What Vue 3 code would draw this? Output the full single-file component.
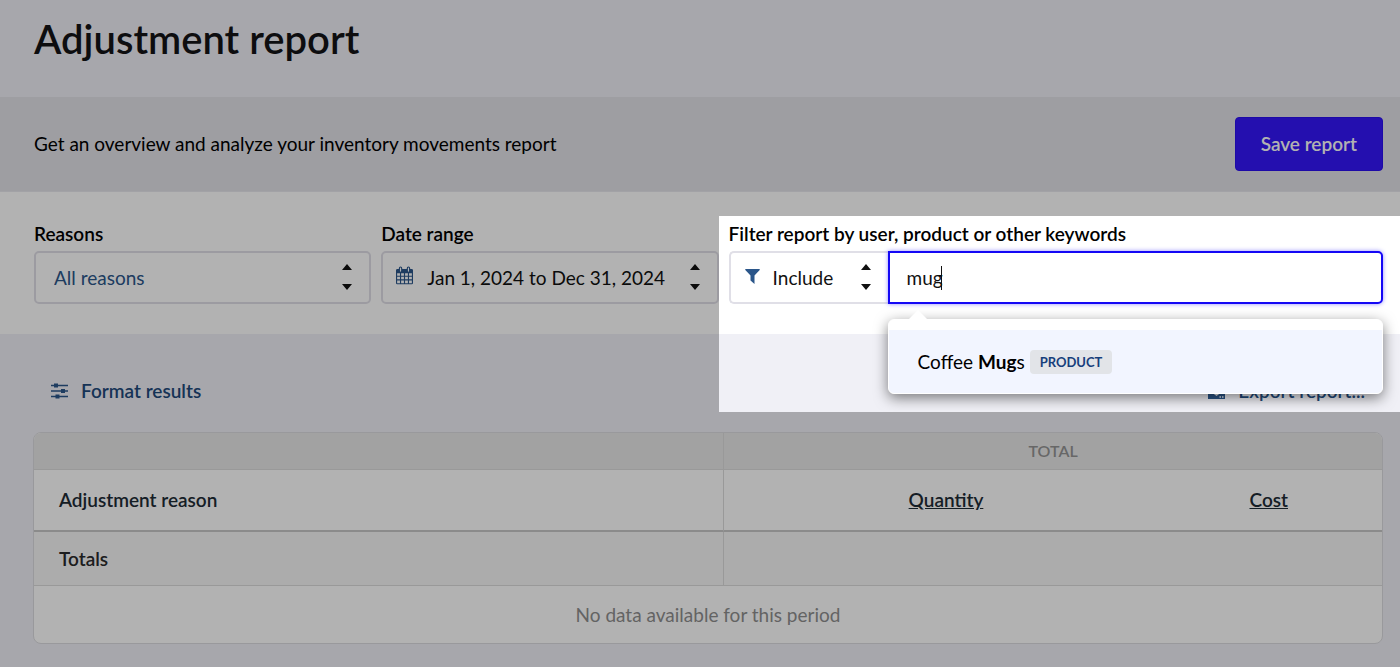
<script setup>
import { ref } from 'vue'

const keyword = ref('mug')
const reason = ref('All reasons')
const range = ref('Jan 1, 2024 to Dec 31, 2024')
const mode = ref('Include')
</script>

<template>
  <div class="page">
    <header class="title-bar">
      <h1>Adjustment report</h1>
    </header>

    <section class="intro">
      <p>Get an overview and analyze your inventory movements report</p>
      <button type="button" class="save">Save report</button>
    </section>

    <form class="filters" @submit.prevent>
      <div class="field">
        <label for="reasons">Reasons</label>
        <div class="control">
          <select id="reasons" v-model="reason" class="box blue">
            <option>All reasons</option>
          </select>
          <svg class="arrows" viewBox="0 0 10 26" aria-hidden="true"><path d="M0 6 5 0l5 6zM0 20h10l-5 6z" /></svg>
        </div>
      </div>

      <div class="field">
        <label for="range">Date range</label>
        <div class="control">
          <svg class="calendar" viewBox="0 0 18 19" aria-hidden="true">
            <path fill="#2b568a" fill-rule="evenodd" d="M1.5 2.5H3V1.8a1.8 1.8 0 0 1 3.6 0v.7h4.8v-.7a1.8 1.8 0 0 1 3.6 0v.7h1.5A1.5 1.5 0 0 1 18 4v13.5a1.3 1.3 0 0 1-1.3 1.3H1.3A1.3 1.3 0 0 1 0 17.500V4a1.500 1.500 0 0 1 1.500-1.500zM1.200 7v2.700h3V7zm4.200 0v2.700h3V7zm4.200 0v2.700h3V7zm4.200 0v2.700h3V7zM1.200 10.900v2.700h3v-2.700zm4.200 0v2.700h3v-2.700zm4.200 0v2.700h3v-2.700zm4.200 0v2.700h3v-2.700zM1.200 14.800v2.800h3v-2.800zm4.200 0v2.800h3v-2.800zm4.200 0v2.800h3v-2.800zm4.200 0v2.800h3v-2.800z" />
            <path d="M4.800 1.500v3.300M13.200 1.500v3.300" stroke="#fff" stroke-width="1.200" stroke-linecap="round" />
          </svg>
          <select id="range" v-model="range" class="box dated">
            <option>Jan 1, 2024 to Dec 31, 2024</option>
          </select>
          <svg class="arrows" viewBox="0 0 10 26" aria-hidden="true"><path d="M0 6 5 0l5 6zM0 20h10l-5 6z" /></svg>
        </div>
      </div>

      <div class="field keyword-field">
        <label for="keyword">Filter report by user, product or other keywords</label>
        <div class="group">
          <div class="control mode">
            <svg class="funnel" viewBox="0 0 15 15" aria-hidden="true"><path fill="#2b568a" d="M.6 0h13.800q.6.200.3 1L9.500 6.500V15L5.500 11.500v-5L.3 1Q0 .2.600 0z" /></svg>
            <select v-model="mode" class="box" aria-label="Filter mode">
              <option>Include</option>
              <option>Exclude</option>
            </select>
            <svg class="arrows" viewBox="0 0 10 26" aria-hidden="true"><path d="M0 6 5 0l5 6zM0 20h10l-5 6z" /></svg>
          </div>
          <div class="control search">
            <input id="keyword" v-model="keyword" type="text" autocomplete="off">
            <span class="caret"></span>
            <div class="suggestions">
              <button type="button" class="suggestion">
                <span>Coffee <b>Mug</b>s</span>
                <span class="tag">PRODUCT</span>
              </button>
            </div>
          </div>
        </div>
        <div class="spotlight"></div>
      </div>
    </form>

    <main class="results">
      <div class="toolbar">
        <button type="button" class="tool">
          <svg viewBox="0 0 17 16" aria-hidden="true">
            <path d="M0 2.500h17M0 8h17M0 13.500h17" stroke="#2b568a" stroke-width="1.300" />
            <path d="M3 .5h4v4H3zM10 6h4v4h-4zM4.500 11.500h4v4h-4z" fill="#2b568a" />
          </svg>
          Format results
        </button>
        <button type="button" class="tool">
          <svg viewBox="0 0 17 16" aria-hidden="true">
            <path fill="#2b568a" fill-rule="evenodd" d="M6.500 0h4v5h3.500l-5.500 5.500L3 5h3.500zM0 10h4.500l4 3 4-3H17v6H0zm11.500 3.300v1.400H13v-1.400zm2.500 0v1.400h1.500v-1.400z" />
          </svg>
          Export report...
        </button>
      </div>

      <table>
        <colgroup>
          <col class="c-reason"><col class="c-quantity"><col class="c-cost">
        </colgroup>
        <thead>
          <tr class="group-row">
            <td></td>
            <th colspan="2" scope="colgroup">TOTAL</th>
          </tr>
          <tr class="heads">
            <th scope="col">Adjustment reason</th>
            <th scope="col" class="num"><a href="#quantity">Quantity</a></th>
            <th scope="col" class="num"><a href="#cost">Cost</a></th>
          </tr>
        </thead>
        <tbody>
          <tr class="totals">
            <th scope="row">Totals</th>
            <td class="num"></td>
            <td class="num"></td>
          </tr>
          <tr class="empty">
            <td colspan="3">No data available for this period</td>
          </tr>
        </tbody>
      </table>
    </main>
  </div>
</template>

<style>
body {
  margin: 0;
  background: #f0f0f6;
}
</style>

<style scoped>
.page {
  min-height: 100vh;
  background: #f0f0f6;
  color: #000;
  font-family: Lato, "Liberation Sans", sans-serif;
  font-size: 19px;
  line-height: 24px;
  overflow: hidden;
}
.page *,
.page *::before {
  box-sizing: border-box;
}
button,
input,
select {
  margin: 0;
  font: inherit;
}
.title-bar {
  padding: 15px 17px 34px 34px;
}
h1 {
  margin: 0;
  color: #141416;
  font-size: 40px;
  line-height: 48px;
  font-weight: 600;
}
.intro {
  display: flex;
  align-items: center;
  justify-content: space-between;
  padding: 20px 17px;
  padding-left: 34px;
  border-bottom: 1px solid #e9e9ee;
  background: #e3e2e9;
}
.intro p {
  margin: 0;
}
.save {
  height: 54px;
  padding: 0 25px;
  border: 1px solid #2a0ff0;
  border-radius: 4px;
  background: #3416fb;
  color: #fff;
  font-weight: 600;
}
.filters {
  display: grid;
  grid-template-columns: 1fr 1fr 1.94fr;
  gap: 10px;
  padding: 30px 17px 30px 34px;
  background: #fff;
}
.field {
  min-width: 0;
}
label {
  display: block;
  margin-bottom: 5px;
  font-weight: 600;
}
.control {
  position: relative;
}
.box,
.search input {
  display: block;
  width: 100%;
  height: 53px;
  padding: 0 18px;
  border: 2px solid #e0dfe7;
  border-radius: 5px;
  background: #fff;
  color: #111;
  outline: none;
}
.box {
  appearance: none;
}
.box.blue {
  color: #2b568a;
}
.box.dated {
  padding-left: 44px;
}
.arrows {
  position: absolute;
  top: 13px;
  right: 19px;
  width: 10px;
  height: 26px;
  fill: #111;
  pointer-events: none;
}
.calendar {
  position: absolute;
  top: 15px;
  left: 15px;
  width: 17px;
  height: 19px;
}
.funnel {
  position: absolute;
  top: 18px;
  left: 16px;
  width: 15px;
  height: 15px;
}
.keyword-field {
  position: relative;
}
.group {
  display: flex;
}
.mode {
  flex: 0 0 159px;
}
.mode .box {
  padding-left: 42px;
  border-right: 0;
  border-radius: 5px 0 0 5px;
}
.mode .arrows {
  right: 17px;
}
.search {
  flex: 1;
}
.search input {
  padding: 0 17px;
  border-color: #1407f5;
  border-radius: 0 5px 5px 0;
  box-shadow: 0 0 4px rgba(40, 30, 255, 0.5);
  caret-color: transparent;
}
.caret {
  position: absolute;
  top: 15px;
  left: 53px;
  width: 1px;
  height: 24px;
  background: #111;
}
.suggestions {
  position: absolute;
  z-index: 2;
  top: 68px;
  left: 0;
  width: 100%;
  padding-top: 10px;
  border: 1px solid #fff;
  border-radius: 6px;
  background: #fff;
  box-shadow: 0 4px 14px rgba(0, 0, 0, 0.5);
}
.suggestions::before {
  content: "";
  position: absolute;
  top: -10px;
  left: 19px;
  border: 10px solid transparent;
  border-top: 0;
  border-bottom-color: #fff;
}
.suggestion {
  display: flex;
  align-items: center;
  gap: 5px;
  width: 100%;
  height: 63px;
  padding: 0 29px;
  border: 0;
  border-radius: 0 0 5px 5px;
  background: #f2f5ff;
  color: #000;
}
.tag {
  padding: 0 10px;
  border-radius: 4px;
  background: #e2e4e8;
  color: #173f7c;
  font-size: 13px;
  font-weight: 700;
}
.spotlight {
  position: absolute;
  z-index: 3;
  top: -6px;
  right: -17px;
  bottom: -108px;
  left: -10px;
  box-shadow: 0 0 0 4000px rgba(0, 0, 0, 0.3);
  pointer-events: none;
}
.results {
  padding: 34px 17px 24px 33px;
}
.toolbar {
  display: flex;
  justify-content: space-between;
  padding: 0 18px;
  margin-bottom: 18px;
}
.tool {
  display: flex;
  align-items: center;
  gap: 13px;
  height: 46px;
  padding: 0;
  border: 0;
  background: none;
  color: #1f4a7c;
  font-weight: 600;
}
.tool svg {
  width: 17px;
  height: 16px;
}
table {
  width: 100%;
  border: 1px solid #dbdbe0;
  border-radius: 8px;
  border-spacing: 0;
  table-layout: fixed;
  overflow: hidden;
  background: #fff;
}
.c-reason {
  width: 51.2%;
}
.c-quantity {
  width: 26.2%;
}
th,
td {
  padding: 0 25px;
  border-bottom: 1px solid #dbdbdb;
  font-weight: 600;
  text-align: left;
}
.page tr > :first-child:not([colspan]) {
  border-right: 1px solid #dbdbdb;
}
.group-row > * {
  height: 37px;
  background: #e9e9e9;
  color: #949494;
  font-size: 16px;
  text-align: center;
}
.heads > * {
  height: 62px;
  border-bottom: 2px solid #c8c8c8;
  color: #1e2b35;
}
.totals > * {
  height: 54px;
  background: #f6f6f6;
  color: #2a2a2c;
}
.empty > td {
  height: 57px;
  border-bottom: 0;
  color: #8f8f8f;
  font-weight: 400;
  text-align: center;
}
.num {
  padding-right: 94px;
  text-align: right;
}
.num a {
  color: inherit;
}
</style>
